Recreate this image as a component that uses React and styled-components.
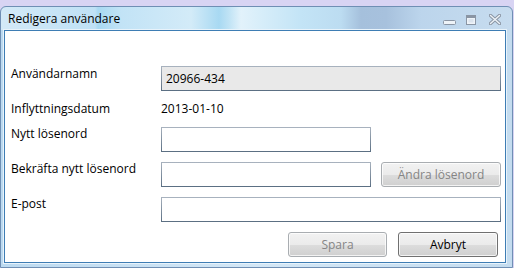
import styled, { createGlobalStyle } from "styled-components";

const GlobalStyle = createGlobalStyle`
  html, body {
    margin: 0;
    padding: 0;
    background: #d8d4f3;
    font-family: "Open Sans", "Noto Sans", sans-serif;
    font-size: 12px;
    color: #000;
  }
`;

const Window = styled.div`
  margin-top: 6px;
  width: 513px;
  height: 262px;
  box-sizing: border-box;
  border: 1px solid #6f8fb4;
  border-radius: 6px 6px 0 0;
  padding: 0 6px 4px 3px;
  display: flex;
  flex-direction: column;
  background:
    linear-gradient(
        90deg,
        #d3e9f7 0px,
        #c6e4f6 60px,
        #bfe1f5 94px,
        #a8d9f2 97px,
        #c2e3f6 120px,
        #d3ebf8 190px,
        #a8d9f2 218px,
        #c0e3f5 228px,
        #e2f2fb 240px,
        #d6edf9 262px,
        #c3e4f6 300px,
        #bcdcf1 340px,
        #a5c0dc 360px,
        #a7c1dd 385px,
        #bcd5ec 420px,
        #c7dcef 513px
      )
      top / 100% 23px no-repeat,
    linear-gradient(90deg, #bcdaf0, #d3e7f6 50%, #c4dcef);
`;

const TitleBar = styled.div`
  height: 23px;
  display: flex;
  align-items: center;
  flex-shrink: 0;
`;

const Title = styled.span`
  margin-left: 4px;
  line-height: 16px;
  flex: 1;
`;

const Caption = styled.svg`
  display: block;
  margin-left: ${(p) => p.$gap}px;
  margin-top: ${(p) => p.$top || 0}px;
`;

const Content = styled.div`
  flex: 1;
  border: 1px solid #3e7db4;
  background: #fff;
  padding: 35px 4px 0 6px;
  box-shadow: 0 0 0 1px #e8f3fb;
`;

const Form = styled.div`
  display: grid;
  grid-template-columns: 150px 340px;
  grid-template-rows: 25px 16px 25px 25px 25px;
  row-gap: 10px;
`;

const Label = styled.div`
  line-height: 16px;
  margin-top: ${(p) => p.$top ?? -1}px;
`;

const Value = styled.div`
  line-height: 16px;
`;

const Field = styled.div`
  display: flex;
  gap: 10px;
`;

const Input = styled.div`
  box-sizing: border-box;
  width: ${(p) => (p.$short ? "210px" : "100%")};
  height: 25px;
  border: 1px solid;
  border-image: linear-gradient(#a9b3bf, #5a6e82) 1;
  background: ${(p) => (p.$disabled ? "#e9e9e9" : "#fff")};
  padding: 0 4px;
  display: flex;
  align-items: center;
  line-height: 16px;
`;

const Button = styled.div`
  box-sizing: border-box;
  width: ${(p) => p.$width || "auto"};
  flex: ${(p) => (p.$width ? "none" : 1)};
  height: 25px;
  border: 1px solid ${(p) => (p.$disabled ? "#a9adb1" : "#707070")};
  border-radius: 3px;
  background: linear-gradient(#f2f2f2 0%, #ebebeb 50%, #dddddd 51%, #cfcfcf 100%);
  box-shadow: inset 0 0 0 1px rgba(255, 255, 255, 0.75);
  color: ${(p) => (p.$disabled ? "#858585" : "#000")};
  display: flex;
  align-items: center;
  justify-content: center;
  line-height: 16px;
`;

const ButtonBar = styled.div`
  display: flex;
  justify-content: flex-end;
  gap: 11px;
  margin-top: 10px;
  padding-right: 3px;
`;

const rows = [
  { label: "Användarnamn", top: 0 },
  { label: "Inflyttningsdatum" },
  { label: "Nytt lösenord" },
  { label: "Bekräfta nytt lösenord" },
  { label: "E-post" },
];

export default function App() {
  return (
    <>
      <GlobalStyle />
      <Window>
        <TitleBar>
          <Title>Redigera användare</Title>
          <Caption width="13" height="5" viewBox="0 0 13 5" $gap={0} $top={8}>
            <rect x="0.5" y="0.5" width="12" height="4" rx="1" fill="#eef3f8" stroke="#8a95a4" />
          </Caption>
          <Caption width="10" height="10" viewBox="0 0 10 10" $gap={10} $top={2}>
            <rect x="0.5" y="0.5" width="9" height="9" fill="#eef3f8" stroke="#8a95a4" />
            <rect x="1" y="1" width="8" height="2" fill="#8a95a4" />
            <rect x="2.5" y="4" width="5" height="3.5" fill="#dbe4ee" />
          </Caption>
          <Caption width="12" height="11" viewBox="0 0 12 11" $gap={13} $top={2}>
            <path d="M1.5 1.5 L10.5 9.5 M10.5 1.5 L1.5 9.5" stroke="#8a95a4" strokeWidth="3.4" strokeLinecap="round" fill="none" />
            <path d="M1.5 1.5 L10.5 9.5 M10.5 1.5 L1.5 9.5" stroke="#eef3f8" strokeWidth="1.4" strokeLinecap="round" fill="none" />
          </Caption>
          <div style={{ width: 5 }} />
        </TitleBar>
        <Content>
          <Form>
            <Label $top={rows[0].top}>{rows[0].label}</Label>
            <Input $disabled>20966-434</Input>
            <Label $top={0}>{rows[1].label}</Label>
            <Value>2013-01-10</Value>
            <Label>{rows[2].label}</Label>
            <Field>
              <Input $short />
            </Field>
            <Label>{rows[3].label}</Label>
            <Field>
              <Input $short />
              <Button $disabled>Ändra lösenord</Button>
            </Field>
            <Label>{rows[4].label}</Label>
            <Input />
          </Form>
          <ButtonBar>
            <Button $disabled $width="99px">Spara</Button>
            <Button $width="100px">Avbryt</Button>
          </ButtonBar>
        </Content>
      </Window>
    </>
  );
}
